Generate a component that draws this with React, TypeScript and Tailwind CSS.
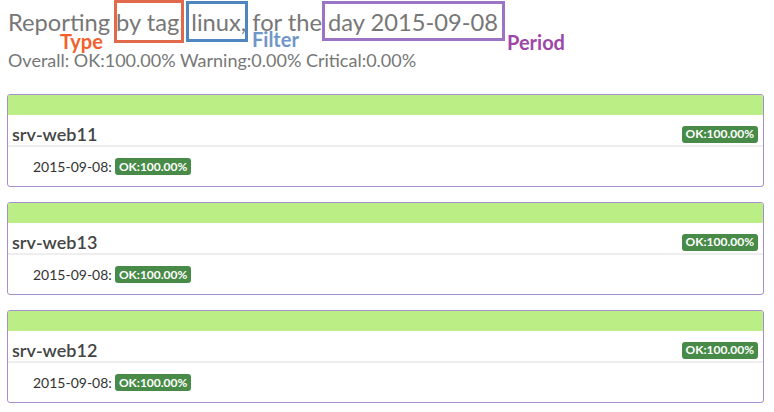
import React from "react";

const hosts = ["srv-web11", "srv-web13", "srv-web12"];

function Badge() {
  return (
    <span className="inline-flex items-center justify-center h-[17px] px-[4px] rounded-[3px] bg-[#488b48] text-white text-[12px] font-bold leading-none">
      OK:100.00%
    </span>
  );
}

function Card({ name }: { name: string }) {
  return (
    <div className="border border-[#a78fcd] rounded-[3px] overflow-hidden bg-white">
      <div className="h-[20px] bg-[#bbef86]" />
      <div className="h-[30px] flex items-end justify-between pl-[4px] pr-[5px]">
        <span className="text-[18px] font-semibold text-[#444] leading-[22px]">{name}</span>
        <span className="pb-[1px]">
          <Badge />
        </span>
      </div>
      <div className="h-[2px] bg-[#eeeeee]" />
      <div className="h-[39px] flex items-center pl-[25px] gap-[3px]">
        <span className="text-[14px] text-[#333]">2015-09-08:</span>
        <Badge />
      </div>
    </div>
  );
}

export default function App() {
  return (
    <div className="w-[774px] h-[412px] bg-white font-['Lato','Liberation_Sans',sans-serif] overflow-hidden">
      <div className="relative h-[94px] px-[8px]">
        <div className="pt-[6px] text-[23.7px] leading-[32px] text-[#777] whitespace-nowrap">
          Reporting by tag: linux, for the day 2015-09-08
        </div>
        <div className="pt-[12px] text-[18px] leading-[20px] text-[#777] whitespace-nowrap">
          Overall: OK:100.00% Warning:0.00% Critical:0.00%
        </div>
        <div className="absolute left-[114px] top-[0px] w-[70px] h-[43px] border-[3px] border-[#e26a4c]" />
        <div className="absolute left-[186px] top-[1px] w-[62px] h-[41px] border-[3px] border-[#4f86bf]" />
        <div className="absolute left-[322px] top-[1px] w-[183px] h-[40px] border-[3px] border-[#9c74c6]" />
        <span className="absolute left-[60px] top-[29px] text-[20px] font-bold text-[#f2612c] leading-[24px]">Type</span>
        <span className="absolute left-[252px] top-[27px] text-[20px] font-bold text-[#6f96c8] leading-[24px]">Filter</span>
        <span className="absolute left-[507px] top-[30px] text-[20px] font-bold text-[#9d48a9] leading-[24px]">Period</span>
      </div>
      <div className="pl-[7px] pr-[10px] flex flex-col gap-[15px]">
        {hosts.map((h) => (
          <Card key={h} name={h} />
        ))}
      </div>
    </div>
  );
}
